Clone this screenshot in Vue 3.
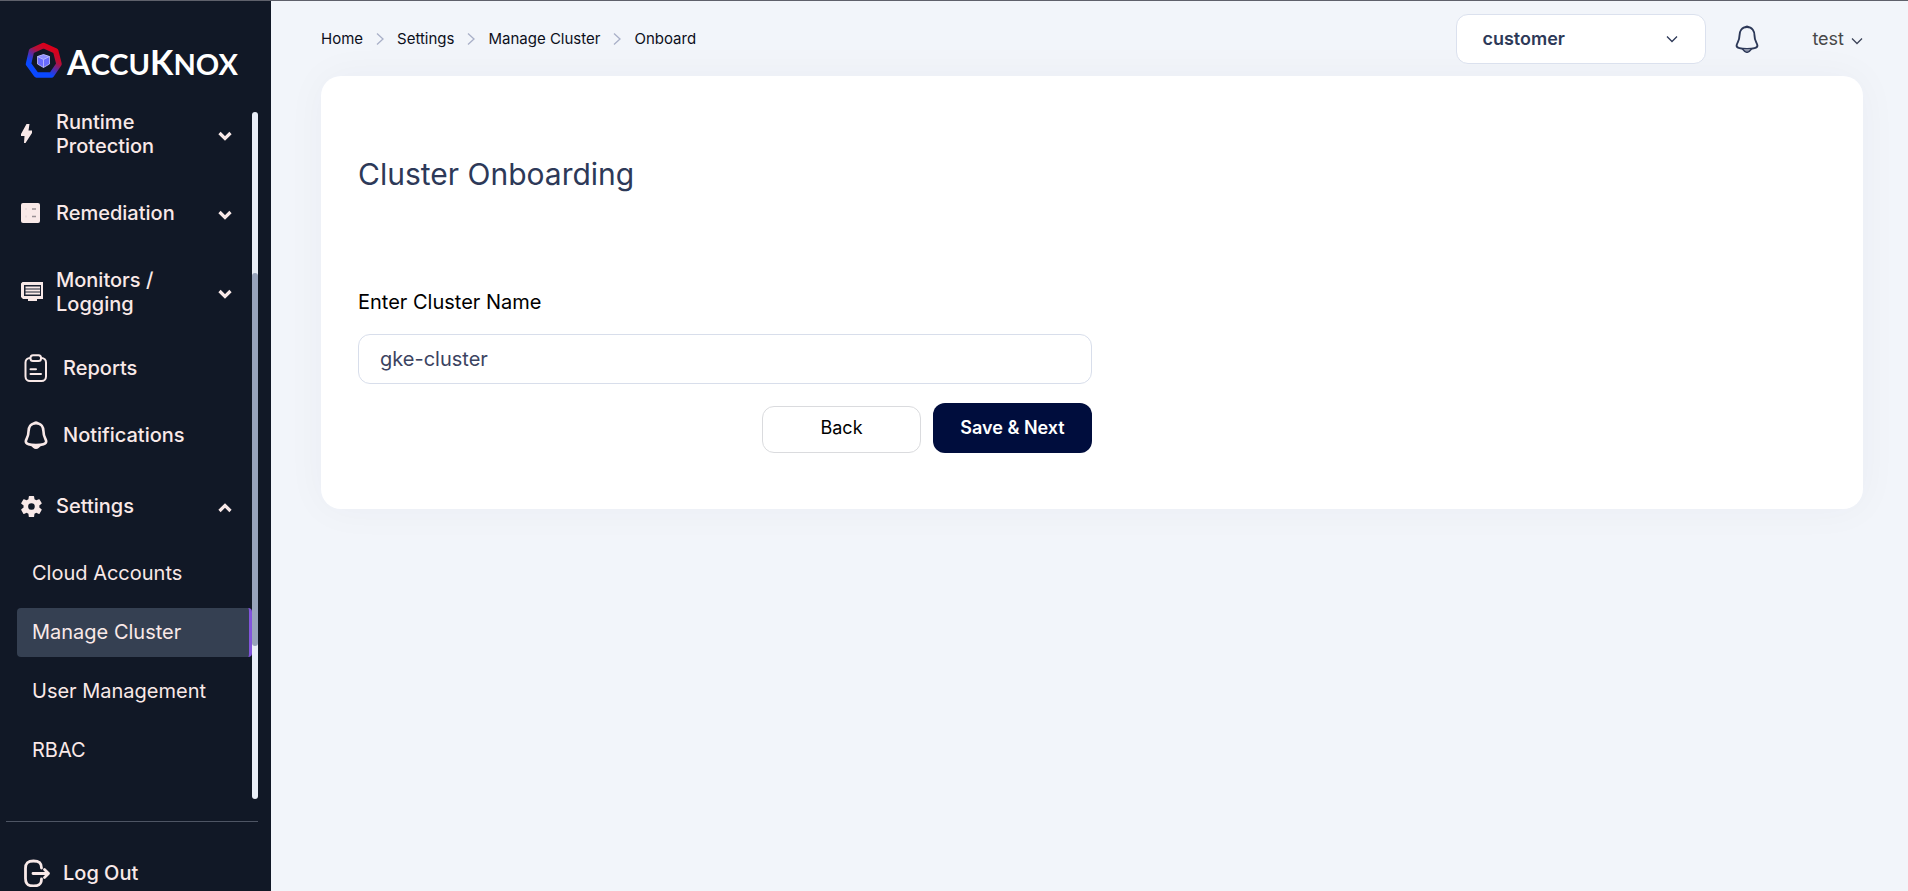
<script setup>
import { ref } from 'vue'

const clusterName = ref('gke-cluster')
const tenant = ref('customer')
const crumbs = ['Home', 'Settings', 'Manage Cluster', 'Onboard']
const subItems = [
  { label: 'Cloud Accounts' },
  { label: 'Manage Cluster', active: true },
  { label: 'User Management' },
  { label: 'RBAC' },
]
</script>

<template>
  <div class="app">
    <aside class="sidebar">
      <a class="brand" href="#" aria-label="AccuKnox">
        <svg class="brand-mark" width="38" height="38" viewBox="0 0 38 38" aria-hidden="true">
          <defs>
            <linearGradient id="ring" x1="0.8" y1="0.15" x2="0.3" y2="0.9">
              <stop offset="0" stop-color="#d9001b" />
              <stop offset="0.3" stop-color="#b5103a" />
              <stop offset="0.65" stop-color="#3c35c8" />
              <stop offset="0.85" stop-color="#0a48ff" />
            </linearGradient>
          </defs>
          <path d="M18.500 4.500 30.700 10 34 23 26.500 34H11.500L3.500 23 6.500 10Z" fill="none" stroke="url(#ring)" stroke-width="5.500" stroke-linejoin="round" />
          <path d="M18.500 13.500 24.500 15.500V23L18.500 26.500 12.500 23V15.500Z" fill="#6a6cff" />
          <path d="M12.500 15.500 18.500 13.500 24.500 15.500 18.500 18.500Z" fill="#8f90ff" />
          <path d="M18.500 13.500 24.500 15.500V23L18.500 26.500 12.500 23V15.500ZM12.500 15.500 18.500 18.500 24.500 15.500M18.500 18.500V26.500" fill="none" stroke="#c4c2ff" stroke-width="0.800" />
        </svg>
        <span class="brand-name"><span class="big">A</span>CCU<span class="big">K</span>NOX</span>
      </a>

      <div class="scroll-area">
        <nav class="menu" aria-label="Main">
          <button class="group tall" type="button">
            <svg width="22" height="22" viewBox="0 0 22 22" aria-hidden="true"><path d="M5.500 1h3L7.500 7.500H11V10L4.500 20H3l.5-7H0V11Z" fill="#f9e9e8" /></svg>
            <span>Runtime<br />Protection</span>
            <svg class="chev" width="14" height="10" viewBox="0 0 14 10" aria-hidden="true"><path d="m1.500 2 5.500 5.500L12.500 2" /></svg>
          </button>
          <button class="group" type="button">
            <svg width="22" height="22" viewBox="0 0 22 22" aria-hidden="true">
              <rect x="0" y="1" width="19" height="20" rx="2" fill="#f9e9e8" />
              <path d="M11 7h4M11 14.500h4" stroke="#9a9194" stroke-width="1.500" />
              <path d="M5 6v2M5 13.500v2" stroke="#ddd0d1" stroke-width="1" />
            </svg>
            <span>Remediation</span>
            <svg class="chev" width="14" height="10" viewBox="0 0 14 10" aria-hidden="true"><path d="m1.500 2 5.500 5.500L12.500 2" /></svg>
          </button>
          <button class="group tall" type="button">
            <svg width="22" height="22" viewBox="0 0 22 22" aria-hidden="true">
              <path d="M1.500 1H22v17h-6v2H7v-2H2L0 16V2.500Z" fill="#f9e9e8" />
              <path d="M3 4h17v11H3Z" fill="#1d2332" />
              <path d="M4.500 6.500H19M4.500 9.500H19M4.500 12.500H19" stroke="#f9e9e8" stroke-width="2" />
            </svg>
            <span>Monitors /<br />Logging</span>
            <svg class="chev" width="14" height="10" viewBox="0 0 14 10" aria-hidden="true"><path d="m1.500 2 5.500 5.500L12.500 2" /></svg>
          </button>
          <a class="single reports" href="#">
            <svg width="24" height="28" viewBox="0 0 24 28" fill="none" stroke="#f9e9e8" stroke-width="2" stroke-linecap="round" aria-hidden="true">
              <rect x="1.500" y="4" width="20.500" height="23" rx="4.500" />
              <rect x="6.500" y="1.200" width="10.500" height="5.800" rx="2.500" fill="#111826" />
              <path d="M6.500 15.200H12M6.500 20H17" />
            </svg>
            <span>Reports</span>
          </a>
          <a class="single notifications" href="#">
            <svg width="24" height="28" viewBox="0 0 24 28" aria-hidden="true">
              <path d="M12 2.200C6.500 2.200 4.500 6.500 4.500 10.500 4.500 16 2.200 17.500 1.800 20.300 1.600 23 6 24 12 24s10.400-1 10.200-3.700C21.800 17.500 19.500 16 19.500 10.500 19.500 6.500 17.500 2.200 12 2.200Z" fill="none" stroke="#f9e9e8" stroke-width="2.600" />
              <path d="M8.500 2.500Q12-2 15.500 2.500ZM6 23h12q-3 5-6 5t-6-5Z" fill="#f9e9e8" />
            </svg>
            <span>Notifications</span>
          </a>
          <button class="group settings" type="button" aria-expanded="true">
            <svg width="22" height="22" viewBox="2.500 1.500 20 20" aria-hidden="true"><path fill="#f9e9e8" d="M19.140 12.940c.04-.3.060-.610.060-.940 0-.320-.020-.640-.070-.940l2.030-1.580c.180-.140.230-.410.120-.610l-1.920-3.320c-.120-.220-.370-.290-.590-.220l-2.390.960c-.500-.380-1.030-.700-1.620-.940l-.360-2.540c-.040-.240-.240-.410-.480-.410h-3.840c-.240 0-.430.170-.470.410l-.360 2.540c-.590.240-1.130.570-1.620.940l-2.390-.960c-.220-.080-.470 0-.590.220L2.740 8.870c-.120.210-.080.470.120.610l2.030 1.580c-.050.300-.090.630-.090.940s.020.640.070.940l-2.030 1.580c-.180.140-.230.410-.120.610l1.920 3.320c.120.220.370.290.590.220l2.390-.960c.500.380 1.030.700 1.620.940l.360 2.540c.050.240.240.410.480.410h3.840c.240 0 .440-.170.470-.410l.360-2.540c.590-.240 1.130-.560 1.620-.940l2.390.960c.220.080.470 0 .590-.220l1.920-3.320c.120-.220.070-.470-.120-.610l-2.010-1.580zM12 15a3 3 0 1 1 0-6 3 3 0 0 1 0 6z" /></svg>
            <span>Settings</span>
            <svg class="chev" width="14" height="10" viewBox="0 0 14 10" aria-hidden="true"><path d="M1.500 8 7 2.500 12.500 8" /></svg>
          </button>
          <ul class="submenu">
            <li v-for="item in subItems" :key="item.label">
              <a href="#" :class="{ active: item.active }">{{ item.label }}</a>
            </li>
          </ul>
        </nav>
        <div class="track" aria-hidden="true"><div class="thumb"></div></div>
      </div>

      <div class="footer">
        <a class="single" href="#">
          <svg width="28" height="28" viewBox="0 0 28 28" fill="none" stroke="#f9e9e8" stroke-width="2.800" stroke-linecap="round" stroke-linejoin="round" aria-hidden="true">
            <path d="M17.500 9C17.500 4 15.500 2 9.500 2S1.500 4.500 1.500 9.500v10c0 5 2 7.500 8 7.500S17.500 25 17.500 20" />
            <path d="M9 14.500H24.500M20.500 10.500 24.500 14.500 20.500 18.500" />
          </svg>
          <span>Log Out</span>
        </a>
      </div>
    </aside>

    <div class="page">
      <header class="topbar">
        <nav class="crumbs" aria-label="Breadcrumb">
          <template v-for="(crumb, i) in crumbs" :key="crumb">
            <svg v-if="i" width="8" height="14" viewBox="0 0 8 14" aria-hidden="true"><path d="m1 1.500 6 5.500-6 5.500" fill="none" stroke="#a9b0c8" stroke-width="1.300" /></svg>
            <a href="#">{{ crumb }}</a>
          </template>
        </nav>
        <div class="tools">
          <div class="tenant">
            <select v-model="tenant" aria-label="Tenant">
              <option>customer</option>
            </select>
            <svg width="12" height="8" viewBox="0 0 12 8" aria-hidden="true"><path d="m1 1.500 5 5 5-5" fill="none" stroke="#2d3958" stroke-width="1.300" /></svg>
          </div>
          <button class="bell" type="button" aria-label="Notifications">
            <svg width="24" height="28" viewBox="0 0 24 28" aria-hidden="true">
              <path d="M12 2C6.500 2 4.500 6.500 4.500 10.500 4.500 16 2 17.500 1.600 20.500 1.400 23 6 24 12 24s10.600-1 10.400-3.500C22 17.500 19.500 16 19.500 10.500 19.500 6.500 17.500 2 12 2Z" fill="none" stroke="#2d3958" stroke-width="1.900" />
              <path d="M9 2.500Q12-1.500 15 2.500Z" fill="#2d3958" />
              <path d="M7.500 24q2.500 3.400 4.500 3.400t4.500-3.400" fill="#8d94a9" stroke="#2d3958" stroke-width="1.300" />
            </svg>
          </button>
          <button class="user" type="button">
            <span>test</span>
            <svg width="12" height="8" viewBox="0 0 12 8" aria-hidden="true"><path d="m1 1.500 5 5 5-5" fill="none" stroke="#3c4358" stroke-width="1.300" /></svg>
          </button>
        </div>
      </header>

      <main class="card">
        <h1>Cluster Onboarding</h1>
        <form class="form" @submit.prevent>
          <label for="cluster-name">Enter Cluster Name</label>
          <input id="cluster-name" v-model="clusterName" type="text" />
          <div class="actions">
            <button class="back" type="button">Back</button>
            <button class="save" type="submit">Save &amp; Next</button>
          </div>
        </form>
      </main>
    </div>
  </div>
</template>

<style>
body {
  background: #f2f5fa;
}
</style>

<style scoped>
.app {
  box-sizing: border-box;
  display: flex;
  height: 100vh;
  overflow: hidden;
  border-top: 1px solid #5f616b;
  background: #f2f5fa;
  font-family: Inter, "Liberation Sans", sans-serif;
}
.app * {
  box-sizing: border-box;
}
button,
input,
select {
  font-family: inherit;
  margin: 0;
}
a {
  color: inherit;
  text-decoration: none;
}
svg {
  display: block;
  flex: none;
}

.sidebar {
  flex: none;
  width: 271px;
  background: #111826;
  color: #f9e9e8;
}
.brand {
  display: flex;
  align-items: center;
  gap: 4px;
  height: 78px;
  padding: 40px 0 0 25px;
  color: #fff;
}
.brand-name {
  font: 700 29px/38px Lato, sans-serif;
  padding-top: 5px;
}
.brand-name .big {
  font-size: 34px;
}
.scroll-area {
  display: flex;
  margin-top: 31px;
}
.menu {
  flex: 1;
  min-width: 0;
  padding-left: 17px;
}
.group {
  display: grid;
  grid-template-columns: 22px 1fr 14px;
  column-gap: 13px;
  align-items: center;
  width: 100%;
  margin: 0 0 43px;
  padding: 0 20px 0 4px;
  border: 0;
  background: none;
  color: inherit;
  font-size: 20px;
  font-weight: 500;
  line-height: 24px;
  text-align: left;
}
.chev {
  margin-top: 4px;
}
.chev path {
  fill: none;
  stroke: #f9e9e8;
  stroke-width: 3.200;
}
.single {
  display: flex;
  align-items: center;
  height: 28px;
  padding-left: 7px;
  font-size: 20px;
  font-weight: 500;
}
.single svg {
  width: 28px;
}
.single span {
  margin-left: 11px;
}
.menu .single svg {
  width: 24px;
}
.menu .single span {
  margin-left: 15px;
}
.reports {
  margin-top: -5px;
}
.notifications {
  margin: 39px 0 45px;
}
.settings {
  margin-bottom: 31px;
}
.submenu {
  display: grid;
  gap: 10px;
  margin: 0;
  padding: 0;
  list-style: none;
}
.submenu a {
  display: block;
  padding: 0 15px;
  border-right: 3px solid transparent;
  border-radius: 4px;
  font-size: 20px;
  line-height: 49px;
}
.submenu .active {
  border-right-color: #8254dc;
  background: #354052;
}
.track {
  flex: none;
  width: 6px;
  height: 687px;
  margin: 2px 13px 0 0;
  padding-top: 161px;
  border-radius: 3px;
  background: #e9eef7;
}
.thumb {
  height: 373px;
  border-radius: 3px;
  background: #97a3bb;
}
.footer {
  margin: 22px 13px 0 6px;
  padding-top: 37px;
  border-top: 1px solid #4e5564;
}
.footer .single {
  padding-left: 18px;
}

.page {
  flex: 1;
  min-width: 0;
  padding: 13px 45px 0 50px;
}
.topbar {
  display: flex;
  align-items: center;
  justify-content: space-between;
  height: 50px;
}
.crumbs {
  display: flex;
  align-items: center;
  gap: 13px;
  padding-bottom: 1px;
  color: #0c0f1a;
  font-size: 15px;
}
.tools {
  display: flex;
  align-items: center;
}
.tenant {
  display: grid;
  align-items: center;
  width: 250px;
}
.tenant select,
.tenant svg {
  grid-area: 1 / 1;
}
.tenant select {
  width: 100%;
  height: 50px;
  padding: 0 25px 2px;
  appearance: none;
  border: 1px solid #dbe1ee;
  border-radius: 12px;
  background: #fff;
  color: #2d3958;
  font-size: 18px;
  font-weight: 600;
}
.tenant svg {
  justify-self: end;
  margin-right: 28px;
  pointer-events: none;
}
.bell {
  margin-left: 29px;
  padding: 0;
  border: 0;
  background: none;
}
.user {
  display: flex;
  align-items: center;
  gap: 7px;
  margin-left: 53px;
  padding: 0 0 2px;
  border: 0;
  background: none;
  color: #484848;
  font-size: 18px;
}
.user svg {
  margin-top: 5px;
}

.card {
  margin-top: 12px;
  padding: 79px 37px 56px;
  border-radius: 20px;
  background: #fff;
  box-shadow: 0 0 40px rgba(30, 40, 70, 0.04);
}
h1 {
  margin: 0;
  color: #2d3958;
  font-size: 30px;
  font-weight: 400;
  line-height: 38px;
}
.form {
  display: flex;
  flex-direction: column;
  width: 50%;
  margin-top: 97px;
}
.form label {
  color: #000;
  font-size: 20px;
  line-height: 24px;
}
.form input {
  width: 100%;
  height: 50px;
  margin-top: 20px;
  padding: 0 21px;
  border: 1px solid #d8deeb;
  border-radius: 12px;
  background: #fff;
  color: #3b4361;
  font-size: 20px;
}
.actions {
  display: flex;
  align-items: flex-end;
  justify-content: flex-end;
  gap: 12px;
  margin-top: 19px;
}
.actions button {
  width: 159px;
  height: 50px;
  padding: 0 0 2px;
  border: 0;
  border-radius: 12px;
  font-size: 18px;
}
.actions .back {
  height: 47px;
  padding-bottom: 4px;
  border: 1px solid #dadbde;
  background: #fff;
  color: #000;
}
.actions .save {
  background: #000d3d;
  color: #fff;
  font-weight: 600;
}
</style>
